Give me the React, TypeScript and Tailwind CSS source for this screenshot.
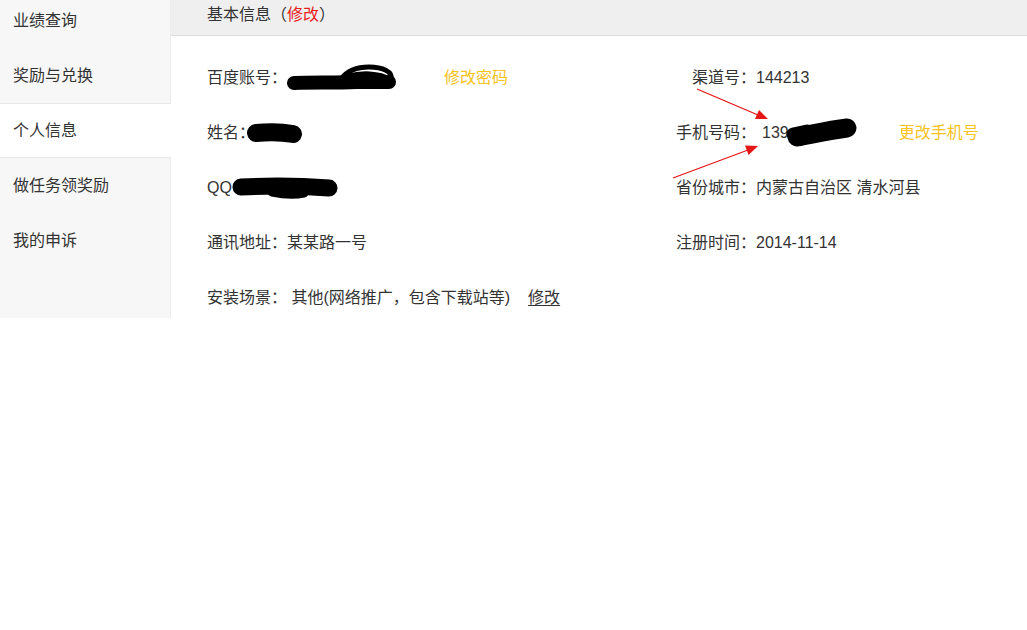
import React from "react";

const FONT = "font-['Liberation_Sans','Noto_Sans_CJK_SC',sans-serif]";

function Redact({ kind }: { kind: "account" | "name" | "qq" | "phone" }) {
  if (kind === "account") {
    return (
      <svg width="110" height="28" viewBox="0 0 110 28" className="inline-block align-middle shrink-0">
        <g fill="none" stroke="#000" strokeLinecap="round" strokeLinejoin="round">
          <path d="M7 19 C25 18 45 19 70 18 L102 18" strokeWidth="14" />
          <path d="M54 15 C60 7 70 3 82 3 C96 3 106 8 104 15" strokeWidth="5" />
          <path d="M60 13 C74 9 92 9 103 16" strokeWidth="6" />
        </g>
      </svg>
    );
  }
  if (kind === "name") {
    return (
      <svg width="56" height="22" viewBox="0 0 56 22" className="inline-block align-middle shrink-0">
        <g fill="none" stroke="#000" strokeLinecap="round">
          <path d="M9 11 C20 10 35 10 46 12" strokeWidth="18" />
        </g>
      </svg>
    );
  }
  if (kind === "qq") {
    return (
      <svg width="106" height="24" viewBox="0 0 106 24" className="inline-block align-middle shrink-0">
        <g fill="none" stroke="#000" strokeLinecap="round">
          <path d="M9 11 C30 10 70 10 97 12" strokeWidth="17" />
          <path d="M40 16 C50 18 62 19 72 17" strokeWidth="9" />
        </g>
      </svg>
    );
  }
  return (
    <svg width="72" height="30" viewBox="0 0 72 30" className="inline-block align-middle shrink-0">
      <g fill="none" stroke="#000" strokeLinecap="round">
        <path d="M12 19 C28 16 46 12 62 10" strokeWidth="19" />
        <path d="M8 16 L22 13" strokeWidth="13" />
      </g>
    </svg>
  );
}

const menu = ["业绩查询", "奖励与兑换", "个人信息", "做任务领奖励", "我的申诉"];

export default function App() {
  return (
    <div className={`relative w-[1027px] h-[630px] bg-white text-[16px] text-[#333] ${FONT}`}>
      <div className="flex">
        <aside className="w-[171px] h-[318px] bg-[#f7f7f7] overflow-hidden shrink-0">
          <ul className="-mt-[7px]">
            {menu.map((m) =>
              m === "个人信息" ? (
                <li key={m} className="h-[55px] flex items-center pl-[13px] bg-white border-y border-[#e8e8e8]">
                  {m}
                </li>
              ) : (
                <li key={m} className="h-[55px] flex items-center pl-[13px] border-r border-[#ececec]">
                  {m}
                </li>
              )
            )}
            <li className="h-[60px] border-r border-[#ececec]" />
          </ul>
        </aside>

        <main className="flex-1">
          <div className="h-[36px] bg-[#efefef] border-b border-[#dcdcdc] pl-[36px] pb-[5px] flex items-center">
            基本信息（<span className="text-[#e8231d]">修改</span>）
          </div>

          <div className="pt-[14px] pl-[36px] grid grid-cols-[469px_1fr]">
            <div className="h-[55px] flex items-center">
              百度账号：<Redact kind="account" />
              <a className="ml-[47px] text-[#f8c31c]">修改密码</a>
            </div>
            <div className="h-[55px] flex items-center">
              <span className="w-[80px] text-right">渠道号：</span>144213
            </div>

            <div className="h-[55px] flex items-center">
              姓名：<span className="-ml-[8px]"><Redact kind="name" /></span>
            </div>
            <div className="h-[55px] flex items-center">
              <span className="w-[80px] text-right">手机号码：</span>
              <span className="ml-[6px]">139</span>
              <span className="-ml-[4px]"><Redact kind="phone" /></span>
              <a className="ml-[42px] text-[#f8c31c]">更改手机号</a>
            </div>

            <div className="h-[55px] flex items-center">
              QQ<Redact kind="qq" />
            </div>
            <div className="h-[55px] flex items-center">
              <span className="w-[80px] text-right">省份城市：</span>内蒙古自治区 清水河县
            </div>

            <div className="h-[55px] flex items-center">通讯地址：某某路一号</div>
            <div className="h-[55px] flex items-center">
              <span className="w-[80px] text-right">注册时间：</span>2014-11-14
            </div>

            <div className="h-[55px] flex items-center">
              安装场景：&nbsp;其他(网络推广，包含下载站等)
              <a className="ml-[18px] underline underline-offset-2">修改</a>
            </div>
            <div />
          </div>
        </main>
      </div>

      {/* annotation arrows drawn on top of the screenshot */}
      <svg className="absolute inset-0 pointer-events-none" width="1027" height="630">
        <g stroke="#e51616" strokeWidth="1.3" fill="#e51616">
          <line x1="697" y1="89" x2="758" y2="115" />
          <polygon points="768,119 755,119 759,110" stroke="none" />
          <line x1="673" y1="178" x2="748" y2="150" />
          <polygon points="758,146 748.5,155 745,145.5" stroke="none" />
        </g>
      </svg>
    </div>
  );
}
